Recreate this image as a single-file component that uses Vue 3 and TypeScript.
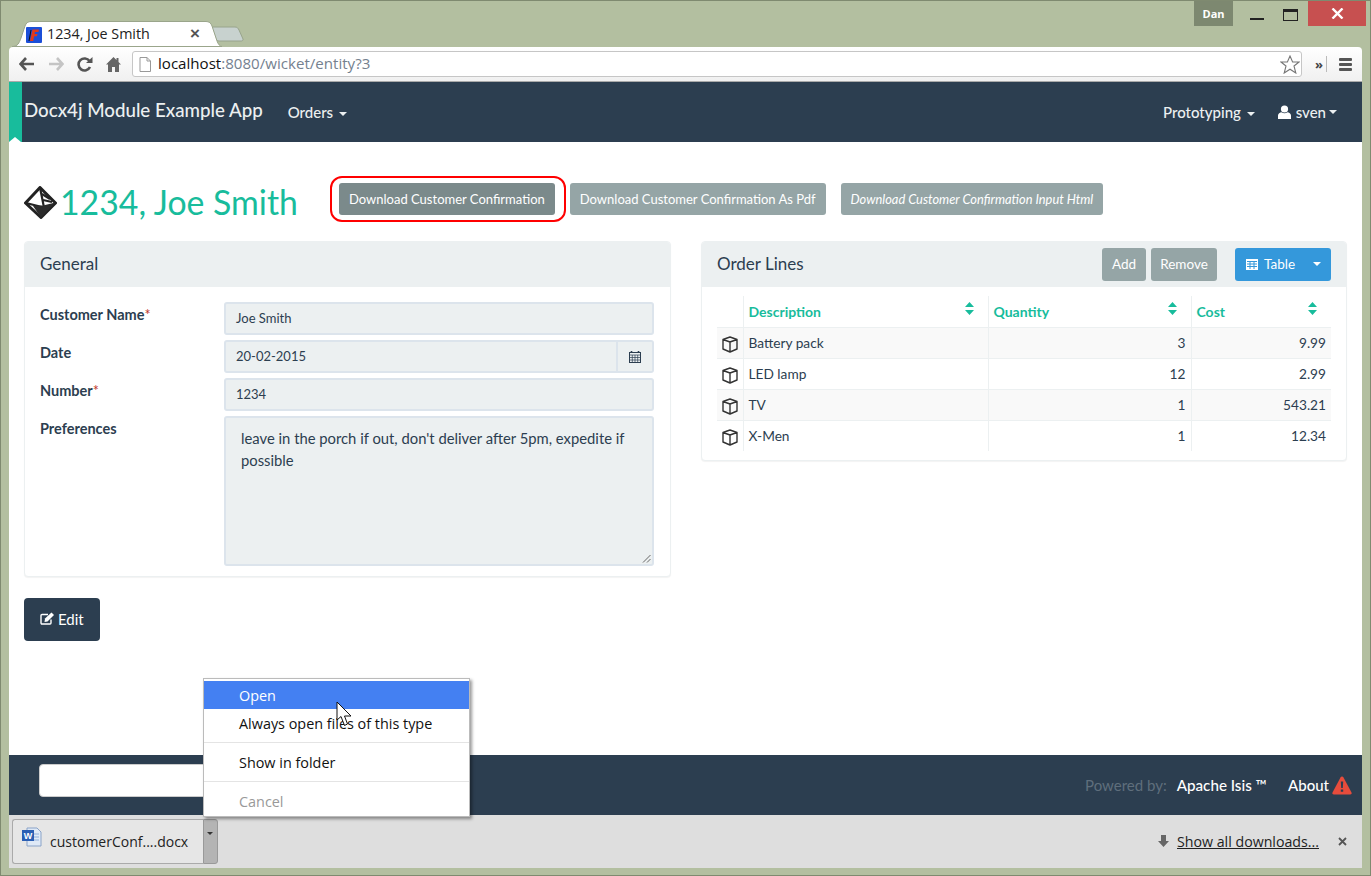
<script setup lang="ts">
interface Line { name: string; qty: string; cost: string }
const lines: Line[] = [
  { name: 'Battery pack', qty: '3', cost: '9.99' },
  { name: 'LED lamp', qty: '12', cost: '2.99' },
  { name: 'TV', qty: '1', cost: '543.21' },
  { name: 'X-Men', qty: '1', cost: '12.34' },
]
const columns = ['Description', 'Quantity', 'Cost']
</script>

<template>
  <div class="window">
    <div class="userbadge">Dan</div>
    <div class="controls">
      <span class="ctl-min"></span>
      <span class="ctl-max"></span>
      <span class="ctl-close">
        <svg width="13" height="11" viewBox="0 0 13 11"><path d="M1.5 .5 11.5 10.5M11.5 .5 1.5 10.5" stroke="#fff" stroke-width="2.4" fill="none"/></svg>
      </span>
    </div>

    <div class="tabstrip">
      <div class="tab">
        <svg class="tab-shape" width="210" height="26" viewBox="0 0 210 26"><path d="M0 25.5C6 25.5 7 22 9 17L13 5C14 2 16 .5 19 .5H194C197 .5 199 2 200 5L205 20C206 23 208 25.5 210 25.5Z" fill="#fff" stroke="#9aa58b"/></svg>
        <svg class="favicon" width="16" height="16" viewBox="0 0 16 16"><rect width="16" height="16" rx="1" fill="#1c4fd8"/><path d="M4 14 6.5 2.5H13L12.5 5H9L8.6 7H11.5L11 9.200H8.200L7.200 14Z" fill="#e0391c"/><path d="M3 14 5 3" stroke="#111" stroke-width="1"/></svg>
        <span class="tab-title">1234, Joe Smith</span>
        <span class="tab-x">×</span>
      </div>
      <svg class="newtab" width="33" height="16" viewBox="0 0 33 16"><path d="M1 1H24C26 1 27 2 28 4L32 13C32.500 14.500 31 15 30 15H8C6 15 5.500 14 5 13L1 2Z" fill="#c8d2cf" stroke="#98a48c"/></svg>
    </div>

    <div class="toolbar">
      <svg class="tool" width="16" height="14" viewBox="0 0 16 14"><path d="M7 1 1.500 7 7 13M2 7H15" stroke="#555" stroke-width="2.600" fill="none"/></svg>
      <svg class="tool" width="16" height="14" viewBox="0 0 16 14"><path d="M9 1 14.500 7 9 13M14 7H1" stroke="#c4c4c4" stroke-width="2.600" fill="none"/></svg>
      <svg class="tool" width="16" height="15" viewBox="0 0 16 15"><path d="M13 10A6 6 0 1 1 12.500 4" stroke="#555" stroke-width="2.600" fill="none"/><path d="M9 6H15.500V0Z" fill="#555"/></svg>
      <svg class="tool" width="15" height="15" viewBox="0 0 15 15"><path d="M7.500 0 10.500 3V1H12.500V5L15 7.500H13V15H9V10H6V15H2V7.500H0Z" fill="#666"/></svg>
      <div class="omnibox">
        <svg width="12" height="15" viewBox="0 0 12 15"><path d="M1 .5H8L11.500 4V14.500H1Z" fill="#fff" stroke="#999"/><path d="M8 .5V4H11.500" fill="none" stroke="#999"/></svg>
        <span class="url"><b>localhost</b>:8080/wicket/entity?3</span>
        <svg class="star" width="20" height="19" viewBox="0 0 20 19"><path d="M10 1 12.600 7H19L14 11 15.800 18 10 14.200 4.200 18 6 11 1 7H7.400Z" fill="#fff" stroke="#777" stroke-width="1.100"/></svg>
      </div>
      <span class="chev">»</span>
      <span class="toolsep"></span>
      <span class="menu-burger"><i></i><i></i><i></i></span>
    </div>

    <div class="page">
      <nav class="navbar">
        <i class="ribbon-notch"></i>
        <span class="brand">Docx4j Module Example App</span>
        <span class="nav-link orders">Orders <i class="caret"></i></span>
        <span class="nav-right">
          <span class="nav-link">Prototyping <i class="caret"></i></span>
          <span class="nav-link user">
            <svg width="13" height="14" viewBox="0 0 13 14"><circle cx="6.500" cy="4" r="3.600" fill="#fff"/><path d="M0 14V10.500C0 8.500 2 7.500 3.500 7.200 5.500 8.500 7.500 8.500 9.500 7.200 11 7.500 13 8.500 13 10.500V14Z" fill="#fff"/></svg>
            sven<i class="caret tight"></i>
          </span>
        </span>
      </nav>

      <main class="content">
        <div class="heading">
          <h1 class="title">
            <svg width="33" height="33" viewBox="0 0 33 33">
              <path d="M16 1.500 31.500 17 17 31.500 1.500 17Z" fill="#fff" stroke="#222" stroke-width="3" stroke-linejoin="round"/>
              <path d="M2 17 20 21.500 16 1.500" fill="none" stroke="#222" stroke-width="2.200"/>
              <path d="M19 19.500 31.500 16.500 17 31.500 9 20Z" fill="#2b2b2b"/>
              <path d="M18 8 26 13M19 14 28 16" stroke="#222" stroke-width="2.200" fill="none"/>
            </svg>
            1234, Joe Smith
          </h1>
          <div class="actions">
            <button class="btn btn-dark ringed">Download Customer Confirmation<span class="ring"></span></button>
            <button class="btn btn-grey">Download Customer Confirmation As Pdf</button>
            <button class="btn btn-grey em">Download Customer Confirmation Input Html</button>
          </div>
        </div>

        <div class="columns">
          <section class="panel general">
            <header class="panel-head">General</header>
            <div class="form">
              <label>Customer Name<em>*</em></label>
              <div class="field">Joe Smith</div>
              <label>Date</label>
              <div class="datefield">
                <div class="field">20-02-2015</div>
                <span class="addon">
                  <svg width="12" height="12" viewBox="0 0 12 12"><path d="M2.500 0V2M9.500 0V2" stroke="#2c3e50" stroke-width="1.600"/><rect x=".5" y="1.500" width="11" height="10" fill="none" stroke="#2c3e50"/><path d="M.5 4H11.500M.5 6.500H11.500M.5 9H11.500M3.300 4V11.500M6 4V11.500M8.700 4V11.500" stroke="#2c3e50" stroke-width=".7"/></svg>
                </span>
              </div>
              <label>Number<em>*</em></label>
              <div class="field">1234</div>
              <label>Preferences</label>
              <div class="field area">
                leave in the porch if out, don't deliver after 5pm, expedite if possible
                <svg class="grip" width="9" height="9" viewBox="0 0 9 9"><path d="M8.500 1 1 8.500M8.500 5 5 8.500" stroke="#666" fill="none"/></svg>
              </div>
            </div>
          </section>

          <section class="panel lines">
            <header class="panel-head with-actions">
              <span>Order Lines</span>
              <span class="head-actions">
                <button class="btn btn-grey tall add">Add</button>
                <button class="btn btn-grey tall remove">Remove</button>
                <button class="btn btn-blue tall">
                  <svg class="tbl-icon" width="12" height="11" viewBox="0 0 12 11"><path d="M0 0H12V11H0Z" fill="#fff"/><path d="M1 2.500H11M1 5H11M1 7.500H11M4 2.500V10M8 2.500V10" stroke="#3498db"/></svg>
                  <span>Table</span>
                  <i class="caret blue-caret"></i>
                </button>
              </span>
            </header>
            <div class="table-wrap">
              <table>
                <colgroup>
                  <col class="c-icon" /><col class="c-desc" /><col class="c-qty" /><col class="c-cost" />
                </colgroup>
                <thead>
                  <tr>
                    <th></th>
                    <th v-for="c in columns" :key="c">
                      {{ c }}
                      <svg class="sort" width="9" height="13" viewBox="0 0 9 13"><path d="M4.500 0 9 5H0ZM4.500 13 0 8H9Z" fill="#18bc9c"/></svg>
                    </th>
                  </tr>
                </thead>
                <tbody>
                  <tr v-for="l in lines" :key="l.name">
                    <td class="cube">
                      <svg width="16" height="17" viewBox="0 0 16 17"><path d="M8 1 15 3.500V13L8 16 1 13V3.500ZM1 3.500 8 6 15 3.500M8 6V16" fill="none" stroke="#333" stroke-width="1.400" stroke-linejoin="round"/></svg>
                    </td>
                    <td>{{ l.name }}</td>
                    <td class="num">{{ l.qty }}</td>
                    <td class="num">{{ l.cost }}</td>
                  </tr>
                </tbody>
              </table>
            </div>
          </section>
        </div>

        <button class="btn-edit">
          <svg width="15" height="13" viewBox="0 0 15 13"><path d="M11 7.500V11C11 11.800 10.500 12 10 12H2C1.300 12 1 11.500 1 11V3.500C1 2.800 1.500 2.500 2 2.500H8" fill="none" stroke="#fff" stroke-width="1.400"/><path d="M5 6.500 11.500 .5 14 3 7.500 9.500 4.500 10Z" fill="#fff"/></svg>
          Edit
        </button>
      </main>

      <footer class="footer">
        <input class="foot-input" type="text" />
        <span class="foot-right">
          <span class="powered">Powered by:</span>
          <span class="isis">Apache Isis ™</span>
          <span class="about">About</span>
          <svg width="20" height="19" viewBox="0 0 20 19"><path d="M10 .5C10.700 .5 11.200 1 11.500 1.500L19.500 16.500C20 17.700 19.300 18.500 18.200 18.500H1.800C.7 18.500 0 17.700 .5 16.500L8.500 1.500C8.800 1 9.300 .5 10 .5Z" fill="#e74c3c"/><path d="M8.800 5.500H11.200L10.800 12H9.200ZM8.800 13.500H11.200V15.800H8.800Z" fill="#2c3e50"/></svg>
        </span>
      </footer>

      <div class="downloads">
        <div class="dl-item">
          <svg width="20" height="20" viewBox="0 0 20 20"><path d="M5 1H15L19 5V19H5Z" fill="#dfe9f6" stroke="#8aa3c8"/><path d="M7 7H17M7 10H17M7 13H17" stroke="#8fb0dc"/><rect x="0" y="3" width="12" height="11" fill="#2b5fb4"/><text x="6" y="12" text-anchor="middle" font-size="9" font-weight="700" fill="#fff" font-family="Liberation Sans">W</text></svg>
          <span class="dl-name">customerConf....docx</span>
        </div>
        <div class="dl-arrow"><i></i></div>
        <span class="dl-right">
          <svg width="11" height="12" viewBox="0 0 11 12"><path d="M3 0H8V6H11L5.500 12 0 6H3Z" fill="#666"/></svg>
          <span class="show-all">Show all downloads...</span>
          <svg class="dl-close" width="9" height="9" viewBox="0 0 9 9"><path d="M1 1 8 8M8 1 1 8" stroke="#555" stroke-width="1.800"/></svg>
        </span>
      </div>

      <div class="ctx">
        <div class="ctx-row active">Open</div>
        <div class="ctx-row">Always open files of this type</div>
        <hr />
        <div class="ctx-row">Show in folder</div>
        <hr />
        <div class="ctx-row off">Cancel</div>
      </div>
      <svg class="cursor" width="16" height="26" viewBox="0 0 16 26"><path d="M1 1V19L5 15.500 8.500 24.500 11.500 23 8.500 15H15Z" fill="#fff" stroke="#111" stroke-width="1"/></svg>
    </div>
  </div>
</template>

<style scoped>
.window {
  position: relative;
  width: 1371px;
  height: 876px;
  box-sizing: border-box;
  padding: 0 8px 7px 8px;
  background: #b3bfa0;
  border: 1px solid #7f8a70;
  display: flex;
  flex-direction: column;
  overflow: hidden;
  font-family: Lato, sans-serif;
  color: #2c3e50;
}
.userbadge {
  position: absolute;
  left: 1193px;
  top: 0;
  width: 39px;
  height: 25px;
  background: #7d8870;
  color: #fff;
  font: 700 11px/25px "Open Sans", sans-serif;
  text-align: center;
}
.controls { position: absolute; left: 1230px; top: 0; width: 135px; height: 25px; }
.ctl-min { position: absolute; left: 19px; top: 17px; width: 14px; height: 2px; background: #222; }
.ctl-max { position: absolute; left: 52px; top: 8px; width: 15px; height: 12px; box-sizing: border-box; border: 1px solid #222; border-top-width: 3px; }
.ctl-close { position: absolute; left: 77px; top: 0; width: 58px; height: 25px; background: #c75050; display: flex; align-items: center; justify-content: center; }

.tabstrip { height: 46px; flex: none; display: flex; align-items: flex-end; position: relative; }
.tab {
  position: relative;
  width: 199px;
  height: 25px;
  margin-left: 4px;
  display: flex;
  align-items: center;
  padding-left: 13px;
  box-sizing: border-box;
  font: 14.300px "Open Sans", sans-serif;
  color: #222;
}
.tab-shape { position: absolute; left: -1px; top: -1px; }
.favicon { position: relative; margin-right: 5px; }
.tab-title { position: relative; white-space: nowrap; margin-top: -2px; }
.tab-x { position: absolute; right: 12px; top: 1px; font: 700 17px/22px "Liberation Sans", sans-serif; color: #555; }
.newtab { margin: 0 0 5px -1px; }

.toolbar {
  height: 35px;
  flex: none;
  display: flex;
  align-items: center;
  background: linear-gradient(#fff, #f0f0f0);
  border-radius: 4px 4px 0 0;
  padding-left: 10px;
  border-bottom: 1px solid #aaa;
  box-sizing: border-box;
  gap: 13px;
}
.omnibox {
  width: 1170px;
  height: 26px;
  margin-left: -2px;
  box-sizing: border-box;
  background: #fff;
  border: 1px solid #c6c6c6;
  border-radius: 3px;
  display: flex;
  align-items: center;
  padding: 0 1px 0 6px;
  gap: 7px;
}
.url { font: 15.100px "Open Sans", sans-serif; color: #75818f; flex: 1; white-space: nowrap; margin-top: -2px; }
.url b { font-weight: 400; color: #111; }
.chev { font: 700 13px "Open Sans", sans-serif; color: #444; margin-left: 0; }
.toolsep { width: 1px; height: 16px; background: #bbb; margin-left: -10px; }
.menu-burger { display: flex; flex-direction: column; gap: 2px; margin-left: -1px; }
.menu-burger i { display: block; width: 13px; height: 3px; background: #555; border-radius: 1px; }

.page { flex: 1; min-height: 0; display: flex; flex-direction: column; position: relative; background: #fff; }

.navbar {
  height: 60px;
  flex: none;
  background: #2c3e50;
  display: flex;
  align-items: center;
  color: #fff;
  padding: 0 25px 0 2px;
  border-left: 13px solid #18bc9c;
  box-sizing: border-box;
  position: relative;
}
.ribbon-notch { position: absolute; left: -13px; bottom: 0; width: 0; height: 0; border-left: 6.500px solid transparent; border-right: 6.500px solid transparent; border-bottom: 5px solid #fff; }
.brand { font-size: 18.700px; font-weight: 500; color: #ecf0f1; margin-top: -4px; white-space: nowrap; }
.nav-link { font-size: 15px; font-weight: 500; color: #ecf0f1; white-space: nowrap; }
.orders { margin-left: 25px; }
.nav-right { margin-left: auto; display: flex; gap: 23px; align-items: center; }
.user { display: inline-flex; align-items: center; gap: 5px; }
.caret { display: inline-block; width: 0; height: 0; border: 4px solid transparent; border-top-color: currentColor; border-bottom-width: 0; vertical-align: middle; margin-left: 2px; }
.caret.tight { margin-left: -2px; }

.content { flex: 1; min-height: 0; padding: 40px 16px 0 15px; box-sizing: border-box; }
.heading { display: flex; align-items: flex-start; height: 59px; }
.title { margin: 0; font-size: 33.800px; line-height: 40px; font-weight: 400; color: #18bc9c; display: flex; align-items: center; gap: 3px; white-space: nowrap; width: 315px; }
.actions { display: flex; gap: 15px; margin-top: 1px; }
.btn {
  border: none;
  color: #fff;
  height: 32px;
  padding: 0 10px;
  border-radius: 3px;
  font: 13px Lato, sans-serif;
  white-space: nowrap;
  position: relative;
}
.btn-dark { background: #7b8a8b; }
.btn-grey { background: #95a5a6; }
.btn-blue { background: #3498db; width: 96px; margin-left: 13px; text-align: left; padding: 0 0 1px 11px; display: inline-flex; align-items: center; gap: 6px; box-sizing: border-box; }
.tbl-icon { flex: none; }
.em { font-style: italic; font-size: 12.850px; }
.ring { position: absolute; left: -9px; top: -7px; width: 236px; height: 46px; box-sizing: border-box; border: 2px solid #f00; border-radius: 12px; }

.columns { display: grid; grid-template-columns: 647px 646px; gap: 30px; align-items: start; }
.panel { border-radius: 4px; background: #fff; border: 1px solid #ecf0f1; box-shadow: 0 1px 1px rgba(0, 0, 0, .05); overflow: hidden; }
.panel-head { height: 45px; background: #ecf0f1; padding-left: 15px; font-size: 17px; line-height: 43px; }
.with-actions { display: flex; justify-content: space-between; padding-right: 15px; }
.head-actions { display: flex; align-items: center; gap: 5px; }
.tall { height: 33px; font-size: 13.500px; }
.add { width: 44px; padding: 0 0 1px; }
.remove { width: 66px; padding: 0 0 1px; }
.blue-caret { margin-left: 12px; }

.form {
  display: grid;
  grid-template-columns: 184px 430px;
  row-gap: 5px;
  padding: 15px 15px 10px;
  grid-template-rows: 33px 33px 33px 150px;
}
.form label { font-size: 14.500px; font-weight: 700; line-height: 26px; }
.form em { color: #c0392b; font-style: normal; font-weight: 400; }
.field {
  box-sizing: border-box;
  background: #ecf0f1;
  border: 2px solid #dce4ec;
  border-radius: 3px;
  padding: 0 10px;
  font-size: 13px;
  line-height: 29px;
  height: 33px;
  position: relative;
}
.datefield { display: flex; }
.datefield .field { flex: 1; border-radius: 3px 0 0 3px; }
.addon { width: 36px; box-sizing: border-box; background: #ecf0f1; border: 2px solid #dce4ec; border-left: none; border-radius: 0 3px 3px 0; display: flex; align-items: center; justify-content: center; }
.area { height: 150px; padding: 9px 15px; font-size: 14.800px; line-height: 22px; }
.grip { position: absolute; right: 1px; bottom: 1px; }

.table-wrap { padding: 9px 15px 9px; }
table { width: 614px; border-collapse: collapse; table-layout: fixed; font-size: 14px; }
.c-icon { width: 26px; }
.c-desc { width: 245px; }
.c-qty { width: 203px; }
.c-cost { width: 140px; }
th { height: 31px; box-sizing: border-box; color: #18bc9c; font-weight: 700; text-align: left; padding: 0 5px; border-left: 1px solid #ecf0f1; border-bottom: 1px solid #ecf0f1; position: relative; }
th:first-child { border-left: none; }
.sort { position: absolute; right: 14px; top: 6px; }
td { height: 31px; box-sizing: border-box; padding: 0 5px; border-left: 1px solid #ecf0f1; border-bottom: 1px solid #ecf0f1; font-size: 13.700px; }
tbody tr:last-child td { border-bottom: none; }
td:first-child { border-left: none; }
tbody tr:nth-child(odd) { background: #f9f9f9; }
.num { text-align: right; }
.cube { text-align: center; padding: 7px 0 0; }

.btn-edit {
  display: flex;
  align-items: center;
  gap: 3px;
  margin-top: 21px;
  width: 76px;
  height: 43px;
  box-sizing: border-box;
  padding: 0 0 2px 16px;
  background: #2c3e50;
  color: #fff;
  border: none;
  border-radius: 4px;
  font: 15px Lato, sans-serif;
}

.footer { height: 60px; flex: none; background: #2c3e50; display: flex; align-items: center; padding: 0 10px 0 30px; box-sizing: border-box; }
.foot-input { width: 200px; height: 33px; box-sizing: border-box; border: 1px solid #ccc; border-radius: 4px; background: #fff; margin-top: -9px; }
.foot-right { margin-left: auto; display: flex; align-items: center; font-size: 15px; color: #fff; font-weight: 500; }
.powered { color: #5f6e7c; font-weight: 400; margin-right: 10px; }
.isis { margin-right: 21px; font-size: 15.200px; }
.about { margin-right: 3px; }

.downloads { height: 53px; flex: none; background: #dedede; display: flex; align-items: center; padding: 0 0 1px 3px; box-sizing: border-box; font: 14.200px "Open Sans", sans-serif; color: #222; }
.dl-item { width: 191px; height: 45px; box-sizing: border-box; background: #e6e6e6; border: 1px solid #aaa; border-right: none; border-radius: 3px 0 0 3px; display: flex; align-items: center; padding-left: 9px; gap: 8px; font-size: 14px; }
.dl-item svg { margin-top: -8px; }
.dl-arrow { width: 15px; height: 45px; box-sizing: border-box; background: #b4b4b4; border: 1px solid #999; border-radius: 0 3px 3px 0; position: relative; }
.dl-arrow i { position: absolute; left: 3px; top: 12px; border: 3px solid transparent; border-top-color: #333; border-bottom-width: 0; }
.dl-right { margin-left: auto; display: flex; align-items: center; gap: 8px; padding-right: 15px; }
.show-all { text-decoration: underline; }
.dl-close { margin-left: 11px; }

.ctx {
  position: absolute;
  left: 194px;
  top: 596px;
  width: 267px;
  height: 139px;
  box-sizing: border-box;
  background: #fff;
  border: 1px solid #bbb;
  padding-top: 2px;
  box-shadow: 2px 2px 3px rgba(0, 0, 0, .4);
  font: 14.400px "Open Sans", sans-serif;
  color: #111;
}
.ctx-row { height: 28px; line-height: 30px; padding-left: 35px; white-space: nowrap; }
.ctx-row.active { background: #4480f2; color: #fff; }
.ctx-row.off { color: #999; }
.ctx hr { margin: 5px 0; border: none; border-top: 1px solid #e4e4e4; }
.cursor { position: absolute; left: 327px; top: 619px; }
</style>

<style>
html, body { margin: 0; background: #fff; }
</style>
